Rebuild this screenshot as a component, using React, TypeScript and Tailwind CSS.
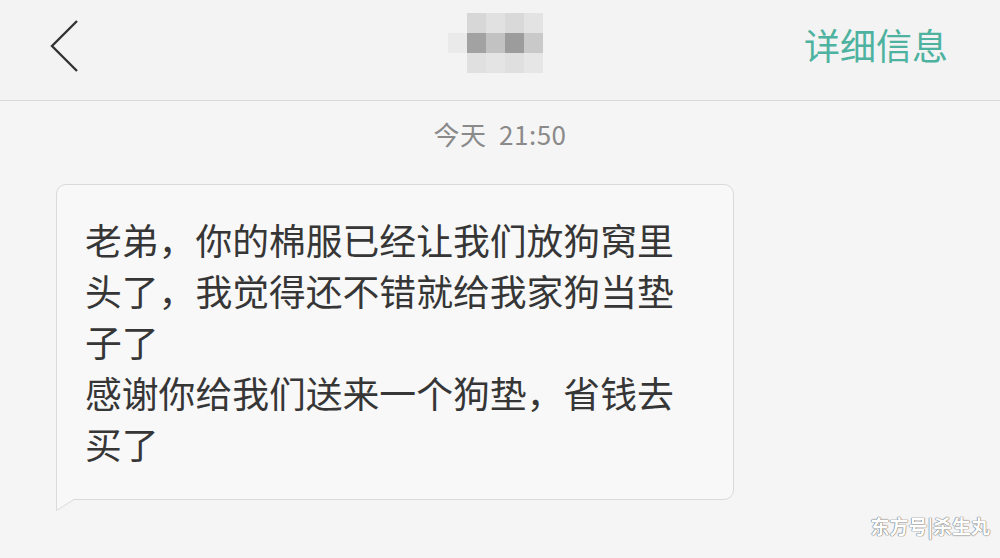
import React from "react";

const font = "font-['Noto_Sans_CJK_SC','Noto_Sans',sans-serif]";

// mosaic blur over the contact name
const mosaic = [
    ["#f3f3f3", "#d7d7d7", "#e1e1e1", "#d9d9d9", "#e3e3e3"],
    ["#eaeaea", "#a2a2a2", "#c2c2c2", "#9c9c9c", "#c9c9c9"],
    ["#f3f3f3", "#e0e0e0", "#e4e4e4", "#dfdfdf", "#e6e6e6"],
];

const lines = [
    "老弟，你的棉服已经让我们放狗窝里",
    "头了，我觉得还不错就给我家狗当垫",
    "子了",
    "感谢你给我们送来一个狗垫，省钱去",
    "买了",
];

const Header = () => (
    <div className="h-[101px] flex items-center bg-[#f3f3f3] border-b border-[#d9d9d9] pl-[50px] pr-[52px]">
        <div className="flex-1 flex">
            <svg width="30" height="54" viewBox="0 0 30 54" className="mt-[-8px]">
                <polyline points="27,2 2,27 27,52" fill="none" stroke="#333" strokeWidth="2.4" strokeLinejoin="miter" />
            </svg>
        </div>
        <div className="flex flex-col ml-[-8px] mt-[-15px]">
            {mosaic.map((row, i) => (
                <div key={i} className="flex">
                    {row.map((c, j) => (
                        <div key={j} className="w-[19px] h-[20px]" style={{ backgroundColor: c }} />
                    ))}
                </div>
            ))}
        </div>
        <div className="flex-1 flex justify-end">
            <span className={`${font} text-[36px] leading-none text-[#4db29f] mt-[-12px]`}>详细信息</span>
        </div>
    </div>
);

export default function App() {
    return (
        <div className={`w-[1000px] h-[558px] overflow-hidden bg-[#f5f5f5] ${font}`}>
            <Header />
            <div className="flex justify-center pt-[17px]">
                <span className="text-[26px] leading-[32px] text-[#8a8a8a] tracking-[0.5px]">今天&nbsp;&nbsp;21:50</span>
            </div>
            <div className="relative ml-[56px] mt-[34px] w-[678px]">
                <div className="rounded-[10px] rounded-bl-none border border-[#dadada] bg-[#f8f8f8] pl-[28px] pr-[40px] pt-[29px] pb-[30px]">
                    {lines.map((l, i) => (
                        <div key={i} className="text-[36.8px] leading-[51px] text-[#363636] whitespace-nowrap">
                            {l}
                        </div>
                    ))}
                </div>
                <svg width="20" height="13" viewBox="0 0 20 13" className="absolute left-0 top-full mt-[-1px]">
                    <polygon points="0.5,0 0.5,11.5 18,0" fill="#f8f8f8" />
                    <polyline points="0.5,0 0.5,11.5 18,0.5 20,0.5" fill="none" stroke="#dadada" strokeWidth="1" />
                </svg>
            </div>
            <div className="flex justify-end pr-[10px] mt-[16px]">
                <span className="text-[19px] leading-none text-white font-bold [text-shadow:0_0_1px_#777,0_0_1px_#777,0_0_1px_#777]">
                    东方号|杀生丸
                </span>
            </div>
        </div>
    );
}
